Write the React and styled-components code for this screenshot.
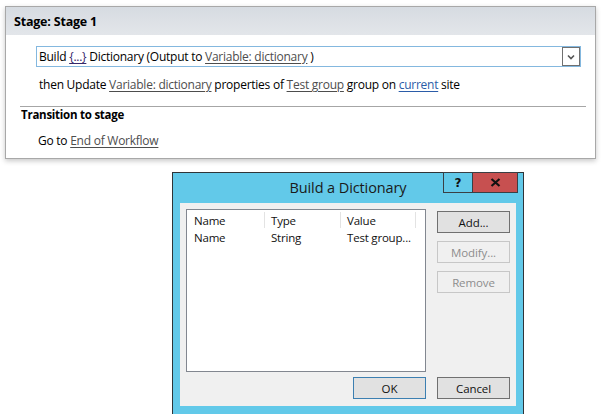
import styled, { createGlobalStyle } from "styled-components";

const GlobalStyle = createGlobalStyle`
  html, body {
    margin: 0;
    padding: 0;
    background: #ffffff;
    font-family: "Open Sans", "Noto Sans", sans-serif;
    color: #000;
  }
`;

const Page = styled.div`
  width: 603px;
  height: 414px;
  overflow: hidden;
  padding-top: 6px;
  box-sizing: border-box;
`;

const StagePanel = styled.div`
  margin-left: 5px;
  width: 591px;
  height: 153px;
  box-sizing: border-box;
  border: 1px solid #a8a8a8;
  background: #fff;
  box-shadow: 0 2px 5px rgba(0, 0, 0, 0.22);
`;

const StageHeader = styled.div`
  height: 28px;
  display: flex;
  align-items: center;
  padding-left: 8px;
  background: linear-gradient(#d6dbe1, #e3e6ea);
  font-weight: 700;
  font-size: 12.5px;
  letter-spacing: -0.2px;
`;

const StageBody = styled.div`
  padding: 11px 0 0 0;
`;

const ActionBox = styled.div`
  margin-left: 30px;
  width: 545px;
  height: 21px;
  box-sizing: border-box;
  border: 1px solid #84b8df;
  display: flex;
  align-items: center;
  justify-content: space-between;
  padding-left: 2px;
`;

const Line = styled.div`
  font-size: 12px;
  letter-spacing: -0.25px;
  white-space: nowrap;
  line-height: 16px;
  margin-left: ${(p) => p.$indent || 0}px;
  margin-top: ${(p) => p.$top || 0}px;
`;

const Link = styled.span`
  color: ${(p) => p.$color || "#4d4d4d"};
  text-decoration: underline;
  text-underline-offset: 2px;
`;

const DropButton = styled.div`
  width: 18px;
  height: 19px;
  box-sizing: border-box;
  border: 1px solid #707070;
  display: flex;
  align-items: center;
  justify-content: center;
`;

const Divider = styled.div`
  margin: 13px 0 0 14px;
  width: 566px;
  height: 1px;
  background: #a6a6a6;
`;

const SectionTitle = styled.div`
  font-weight: 700;
  font-size: 11.5px;
  letter-spacing: -0.25px;
  margin: 0 0 0 15px;
  line-height: 16px;
`;

const Dialog = styled.div`
  margin: 13px 0 0 172px;
  width: 352px;
  height: 243px;
  box-sizing: border-box;
  border: 1px solid #2f3438;
  background: #62c9e9;
  display: flex;
  flex-direction: column;
`;

const TitleBar = styled.div`
  height: 30px;
  display: flex;
  align-items: flex-start;
  position: relative;
`;

const Title = styled.div`
  flex: 1;
  text-align: center;
  font-size: 14.5px;
  color: #1a1a1a;
  padding-top: 5px;
  letter-spacing: -0.1px;
`;

const Controls = styled.div`
  position: absolute;
  right: 5px;
  top: -1px;
  display: flex;
`;

const CtrlButton = styled.div`
  width: ${(p) => p.$w}px;
  height: 21px;
  box-sizing: border-box;
  border: 1px solid #3a3f44;
  margin-left: -1px;
  background: ${(p) => p.$bg};
  display: flex;
  align-items: center;
  justify-content: center;
  font-family: "DejaVu Sans", sans-serif;
  font-weight: 700;
  font-size: 12px;
  color: #111;
`;

const Client = styled.div`
  margin: 0 7px;
  height: 203px;
  background: #f0f0f0;
  display: grid;
  grid-template-columns: 240px 73px;
  align-content: start;
  column-gap: 11px;
  padding: 6px 0 0 6px;
  box-sizing: border-box;
`;

const ListView = styled.div`
  height: 163px;
  box-sizing: border-box;
  border: 1px solid #828790;
  background: #fff;
  padding: 2px 1px;
`;

const ListRow = styled.div`
  display: grid;
  grid-template-columns: 77px 76px 75px;
  height: ${(p) => (p.$head ? 16 : 18)}px;
  align-items: center;
  font-size: 11.5px;
  letter-spacing: -0.2px;
  color: #111;
`;

const Cell = styled.div`
  padding-left: 6px;
  height: 100%;
  display: flex;
  align-items: center;
  box-sizing: border-box;
  white-space: nowrap;
  border-right: ${(p) => (p.$head ? "1px solid #e3e3e3" : "none")};
`;

const ButtonCol = styled.div`
  display: flex;
  flex-direction: column;
  gap: 8px;
  padding-top: 2px;
`;

const Btn = styled.div`
  width: 73px;
  height: 22px;
  box-sizing: border-box;
  border: 1px solid ${(p) => (p.$disabled ? "#c7c7c7" : p.$default ? "#3c7fb1" : "#707070")};
  background: ${(p) => (p.$disabled ? "#f0f0f0" : "#e1e1e1")};
  color: ${(p) => (p.$disabled ? "#8d8d8d" : "#111")};
  font-size: 11.5px;
  letter-spacing: -0.1px;
  display: flex;
  align-items: center;
  justify-content: center;
`;

const Footer = styled.div`
  grid-column: 1 / 3;
  display: flex;
  justify-content: flex-end;
  gap: 11px;
  margin-top: 5px;
`;

export default function App() {
  return (
    <Page>
      <GlobalStyle />
      <StagePanel>
        <StageHeader>Stage: Stage 1</StageHeader>
        <StageBody>
          <ActionBox>
            <Line>
              Build <Link $color="#35286b">{"{...}"}</Link> Dictionary (Output to{" "}
              <Link>Variable: dictionary</Link> )
            </Line>
            <DropButton>
              <svg width="10" height="8" viewBox="0 0 10 8">
                <path d="M2 2.5 L5 5.5 L8 2.5" fill="none" stroke="#555" strokeWidth="1.6" />
              </svg>
            </DropButton>
          </ActionBox>
          <Line $indent={33} $top={10}>
            then Update <Link>Variable: dictionary</Link> properties of{" "}
            <Link>Test group</Link> group on <Link $color="#2b5ca8">current</Link> site
          </Line>
          <Divider />
          <SectionTitle>Transition to stage</SectionTitle>
          <Line $indent={32} $top={10}>
            Go to <Link>End of Workflow</Link>
          </Line>
        </StageBody>
      </StagePanel>

      <Dialog>
        <TitleBar>
          <Title>Build a Dictionary</Title>
          <Controls>
            <CtrlButton $w={30} $bg="#62c9e9">?</CtrlButton>
            <CtrlButton $w={46} $bg="#c75050">
              <svg width="11" height="9" viewBox="0 0 11 9">
                <path d="M1.5 1 L9.5 8 M9.5 1 L1.5 8" stroke="#111" strokeWidth="2.2" />
              </svg>
            </CtrlButton>
          </Controls>
        </TitleBar>
        <Client>
          <ListView>
            <ListRow $head>
              <Cell $head>Name</Cell>
              <Cell $head>Type</Cell>
              <Cell $head>Value</Cell>
            </ListRow>
            <ListRow>
              <Cell>Name</Cell>
              <Cell>String</Cell>
              <Cell>Test group...</Cell>
            </ListRow>
          </ListView>
          <ButtonCol>
            <Btn>Add...</Btn>
            <Btn $disabled>Modify...</Btn>
            <Btn $disabled>Remove</Btn>
          </ButtonCol>
          <Footer>
            <Btn $default>OK</Btn>
            <Btn>Cancel</Btn>
          </Footer>
        </Client>
      </Dialog>
    </Page>
  );
}
